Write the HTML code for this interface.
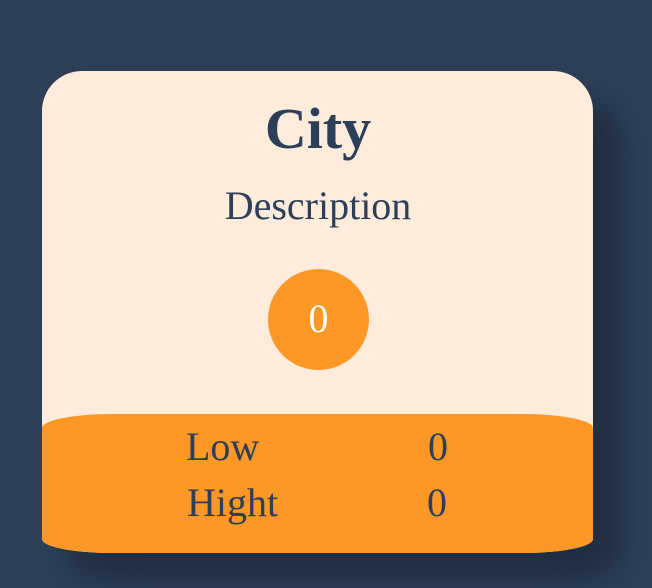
<!DOCTYPE html>
<html><head><meta charset="utf-8"><style>
*{margin:0;padding:0;box-sizing:border-box}
body{width:652px;height:588px;background:#2e3f58;position:relative;overflow:hidden;font-family:"Liberation Serif",serif;color:#2d3e58}
.card{position:absolute;left:42px;top:71px;width:551px;height:482px;background:#fdecdb;border-radius:40px 40px 70px 70px/40px 40px 14px 14px;box-shadow:28px 28px 32px rgba(22,32,48,.55)}
.band{position:absolute;left:42px;top:414px;width:551px;height:139px;background:#fd9827;border-radius:70px 70px 70px 70px/14px 14px 14px 14px}
.t{position:absolute;line-height:1;white-space:nowrap}
.circle{position:absolute;left:268px;top:269px;width:101px;height:101px;border-radius:50%;background:#fd9827}
</style></head><body>
<div class="card"></div>
<div class="band"></div>
<div class="t" style="left:0;width:636px;text-align:center;top:100px;font-size:58px;font-weight:bold">City</div>
<div class="t" style="left:0;width:636px;text-align:center;top:186px;font-size:40px">Description</div>
<div class="circle"></div>
<div class="t" style="left:268px;width:101px;text-align:center;top:299px;font-size:40px;color:#fff">0</div>
<div class="t" style="left:186px;top:427px;font-size:40px">Low</div>
<div class="t" style="left:428px;top:427px;font-size:40px">0</div>
<div class="t" style="left:187px;top:483px;font-size:40px">Hight</div>
<div class="t" style="left:427px;top:483px;font-size:40px">0</div>
</body></html>
